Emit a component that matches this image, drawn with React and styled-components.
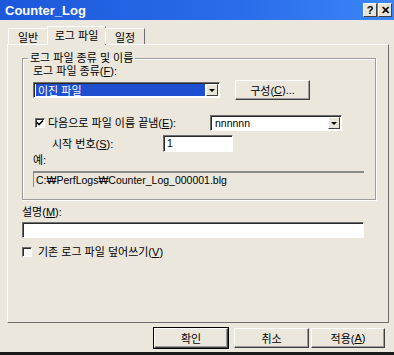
import React from "react";
import styled, { createGlobalStyle } from "styled-components";

const Global = createGlobalStyle`
  html, body { margin: 0; padding: 0; background: #EBE7DC; }
  body {
    font-family: "Liberation Sans", "Noto Sans CJK KR", sans-serif;
    font-size: 11px;
    color: #000;
  }
  u { text-decoration: underline; }
`;

const Window = styled.div`
  width: 394px;
  height: 355px;
  background: #EBE7DC;
  display: flex;
  flex-direction: column;
  overflow: hidden;
  border-bottom: 3px solid #1a1a1a;
  box-sizing: border-box;
`;

const TitleBar = styled.div`
  height: 20px;
  background: linear-gradient(90deg, #1C58DA 0%, #2A6CEA 60%, #3B86F6 100%);
  display: flex;
  align-items: center;
  padding: 0 2px 0 5px;
  flex-shrink: 0;
`;

const Title = styled.span`
  flex: 1;
  color: #fff;
  font-weight: bold;
  font-size: 13px;
`;

const CapButton = styled.div`
  width: 14px;
  height: 14px;
  margin-left: 1px;
  box-sizing: border-box;
  background: #E8E4D8;
  border: 1px solid;
  border-color: #fff #404040 #404040 #fff;
  display: flex;
  align-items: center;
  justify-content: center;
  font-weight: bold;
  font-size: 11px;
  line-height: 1;
  color: #000;
`;

const Body = styled.div`
  flex: 1;
  padding: 6px 4px 0 7px;
  display: flex;
  flex-direction: column;
`;

const TabStrip = styled.div`
  display: flex;
  align-items: flex-end;
  height: 18px;
  padding-left: 1px;
  position: relative;
  z-index: 1;
`;

const Tab = styled.div`
  width: ${(p) => p.$w}px;
  height: ${(p) => (p.$active ? "19px" : "16px")};
  margin: 0 ${(p) => (p.$active ? "-1px" : "0")} ${(p) => (p.$active ? "-1px" : "0")};
  display: flex;
  align-items: center;
  justify-content: center;
  padding-bottom: ${(p) => (p.$active ? "2px" : "0")};
  background: #EBE7DC;
  border-left: 1px solid #fff;
  border-top: 1px solid #fff;
  border-right: 1px solid #6e6e6e;
  box-sizing: border-box;
  flex-shrink: 0;
`;

const Panel = styled.div`
  width: 382px;
  height: 279px;
  box-sizing: border-box;
  border: 1px solid;
  border-color: #fff #6e6e6e #6e6e6e #fff;
  padding: 8px 12px 0 14px;
  display: flex;
  flex-direction: column;
`;

const Group = styled.fieldset`
  margin: 0;
  padding: 0 10px;
  width: 354px;
  height: 147px;
  box-sizing: border-box;
  border: 1px solid #9c9c9c;
  box-shadow: inset 1px 1px 0 #fff, 1px 1px 0 #fff;
  display: flex;
  flex-direction: column;
`;

const Legend = styled.legend`
  padding: 0 2px;
  margin-left: -5px;
  line-height: 11px;
`;

const Label = styled.div`
  line-height: 12px;
  height: 12px;
  white-space: nowrap;
  flex-shrink: 0;
  width: ${(p) => (p.$w ? `${p.$w}px` : "auto")};
  padding-left: ${(p) => p.$pl || 0}px;
  margin-top: ${(p) => p.$mt || 0}px;
  box-sizing: border-box;
`;

const Row = styled.div`
  display: flex;
  align-items: center;
  margin-top: ${(p) => p.$mt || 0}px;
  padding-left: ${(p) => p.$pl || 0}px;
`;

const Select = styled.div`
  width: ${(p) => p.$w}px;
  height: 16px;
  box-sizing: border-box;
  background: #fff;
  border: 1px solid;
  border-color: #6e6e6e #fff #fff #6e6e6e;
  box-shadow: inset 1px 1px 0 #2b2b2b;
  display: flex;
  align-items: stretch;
  padding: 1px 1px 1px 2px;
  flex-shrink: 0;
`;

const SelectValue = styled.div`
  flex: 1;
  display: flex;
  align-items: center;
  padding-left: 2px;
  font-size: ${(p) => (p.$hl ? "11px" : "10.5px")};
  background: ${(p) => (p.$hl ? "#1E4FD0" : "transparent")};
  color: ${(p) => (p.$hl ? "#fff" : "#000")};
  margin-right: 1px;
`;

const Arrow = styled.div`
  width: 12px;
  background: #E8E4D8;
  border: 1px solid;
  border-color: #fff #404040 #404040 #fff;
  box-sizing: border-box;
  display: flex;
  align-items: center;
  justify-content: center;
  &::after {
    content: "";
    border-left: 3px solid transparent;
    border-right: 3px solid transparent;
    border-top: 3px solid #000;
  }
`;

const Button = styled.div`
  width: ${(p) => p.$w || 74}px;
  height: 20px;
  box-sizing: border-box;
  background: #EBE7DC;
  border: 1px solid;
  border-color: #fff #404040 #404040 #fff;
  outline: ${(p) => (p.$default ? "1px solid #000" : "none")};
  box-shadow: inset -1px -1px 0 #9c9c9c;
  display: flex;
  align-items: center;
  justify-content: center;
  margin-left: ${(p) => p.$ml || 0}px;
  flex-shrink: 0;
`;

const Check = styled.div`
  width: 10px;
  height: 10px;
  box-sizing: border-box;
  background: #fff;
  border: 1px solid;
  border-color: #6e6e6e #fff #fff #6e6e6e;
  box-shadow: inset 1px 1px 0 #2b2b2b;
  display: flex;
  align-items: center;
  justify-content: center;
  margin-right: ${(p) => p.$mr || 4}px;
  flex-shrink: 0;
`;

const TextInput = styled.div`
  width: ${(p) => p.$w}px;
  height: ${(p) => p.$h || 16}px;
  box-sizing: border-box;
  background: #fff;
  border: 1px solid;
  border-color: #6e6e6e #fff #fff #6e6e6e;
  box-shadow: inset 1px 1px 0 #2b2b2b;
  padding: 1px 3px;
  font-size: 10.5px;
  line-height: 12px;
  margin-top: ${(p) => p.$mt || 0}px;
  flex-shrink: 0;
`;

const ReadOnly = styled.div`
  width: 331px;
  height: 16px;
  box-sizing: border-box;
  border-top: 2px solid #8a8a8a;
  border-left: 1px solid #8a8a8a;
  padding: 1px 2px 0;
  font-size: 10.5px;
  line-height: 12px;
  margin-top: 5px;
`;

const Footer = styled.div`
  display: flex;
  justify-content: flex-end;
  padding: 5px 5px 0 0;
`;

const CheckMark = () => (
  <svg width="8" height="8" viewBox="0 0 8 8">
    <path d="M1 3.5 L3 5.5 L7 1.5" stroke="#000" strokeWidth="1.6" fill="none" />
  </svg>
);

export default function App() {
  return (
    <>
      <Global />
      <Window>
        <TitleBar>
          <Title>Counter_Log</Title>
          <CapButton>?</CapButton>
          <CapButton>✕</CapButton>
        </TitleBar>
        <Body>
          <TabStrip>
            <Tab $w={40}>일반</Tab>
            <Tab $w={59} $active>로그 파일</Tab>
            <Tab $w={40}>일정</Tab>
          </TabStrip>
          <Panel>
            <Group>
              <Legend>로그 파일 종류 및 이름</Legend>
              <Label $mt={1}>로그 파일 종류(<u>F</u>):</Label>
              <Row $mt={3}>
                <Select $w={187}>
                  <SelectValue $hl>이진 파일</SelectValue>
                  <Arrow />
                </Select>
                <Button $w={75} $ml={15}>구성(<u>C</u>)...</Button>
              </Row>
              <Row $mt={15} $pl={2}>
                <Check $mr={3}><CheckMark /></Check>
                <Label $w={162}>다음으로 파일 이름 끝냄(<u>E</u>):</Label>
                <Select $w={132}>
                  <SelectValue>nnnnnn</SelectValue>
                  <Arrow />
                </Select>
              </Row>
              <Row $mt={4}>
                <Label $w={130} $pl={19}>시작 번호(<u>S</u>):</Label>
                <TextInput $w={70} $h={17}>1</TextInput>
              </Row>
              <Label $mt={2}>예:</Label>
              <ReadOnly>C:₩PerfLogs₩Counter_Log_000001.blg</ReadOnly>
            </Group>
            <Label $mt={6}>설명(<u>M</u>):</Label>
            <TextInput $w={342} $mt={4} />
            <Row $mt={8}>
              <Check $mr={6} />
              <Label>기존 로그 파일 덮어쓰기(<u>V</u>)</Label>
            </Row>
          </Panel>
          <Footer>
            <Button $default>확인</Button>
            <Button $w={75} $ml={6}>취소</Button>
            <Button $ml={2}>적용(<u>A</u>)</Button>
          </Footer>
        </Body>
      </Window>
    </>
  );
}
